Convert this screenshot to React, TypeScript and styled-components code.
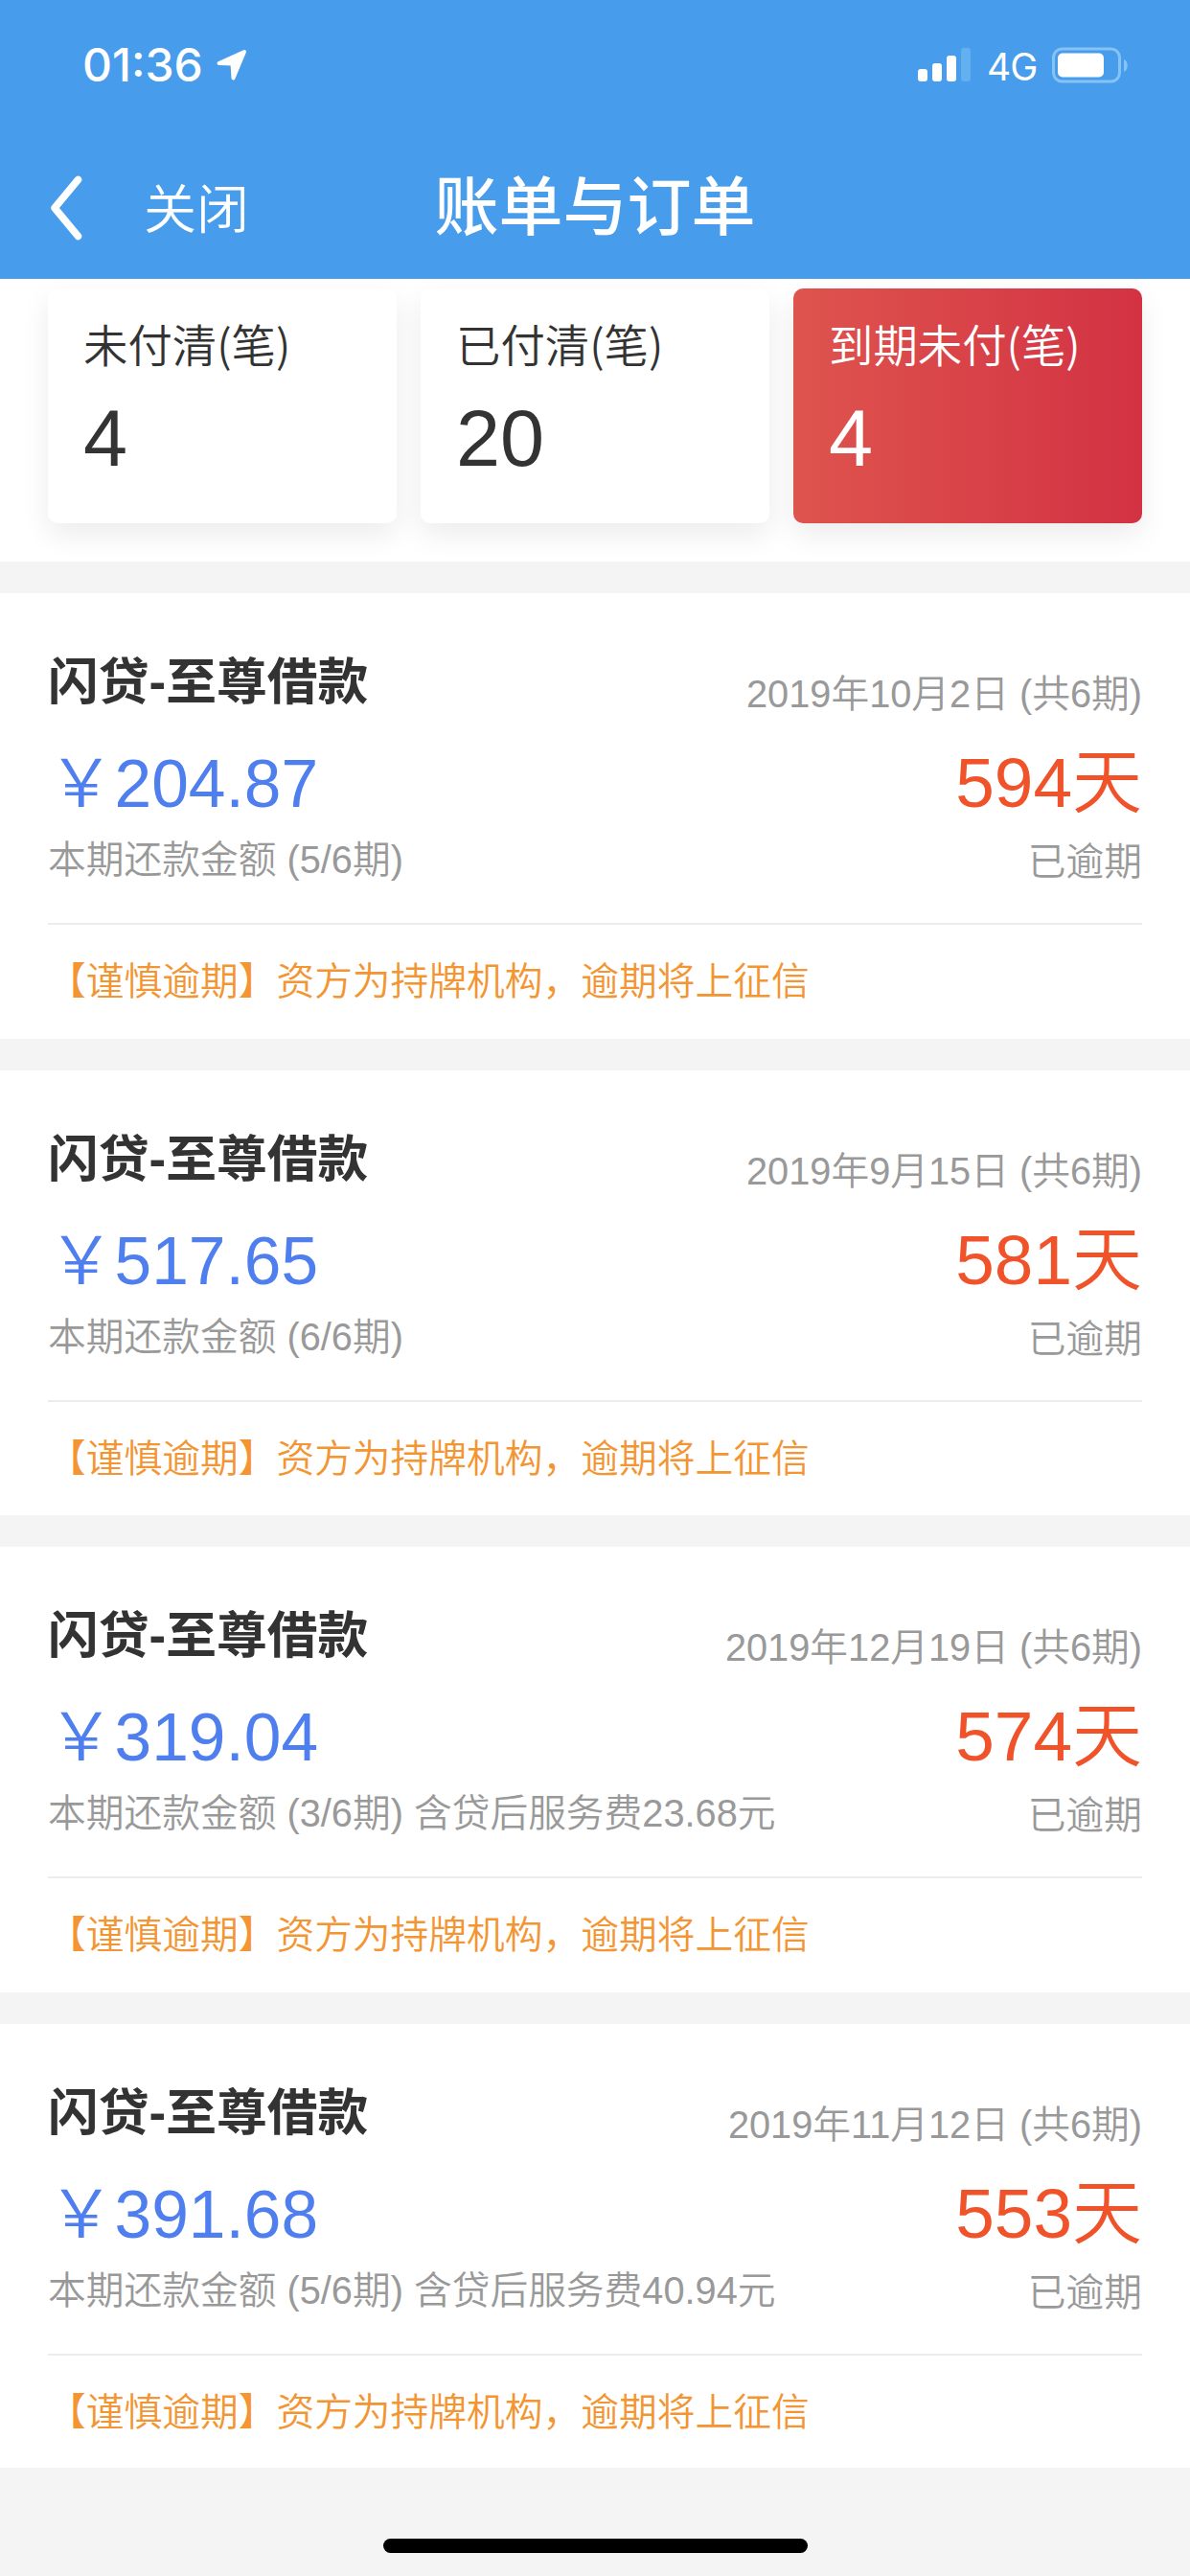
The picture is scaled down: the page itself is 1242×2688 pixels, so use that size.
import React from "react";
import styled, { createGlobalStyle } from "styled-components";

const GlobalStyle = createGlobalStyle`
  * { box-sizing: border-box; }
  body {
    margin: 0;
    background: #f4f4f4;
    font-family: "Liberation Sans", "Noto Sans CJK SC", sans-serif;
    text-spacing-trim: space-all;
  }
`;

const Screen = styled.div`
  width: 1242px;
  height: 2688px;
  display: flex;
  flex-direction: column;
  overflow: hidden;
  background: #f4f4f4;
`;

const Header = styled.header`
  height: 291px;
  flex: none;
  background: #479ceb;
  color: #fff;
`;

const StatusBar = styled.div`
  height: 143px;
  padding: 0 65px 7px 86px;
  display: flex;
  align-items: center;
  justify-content: space-between;
  font-family: Inter, sans-serif;
`;

const StatusGroup = styled.div`
  display: flex;
  align-items: center;
`;

const Clock = styled.span`
  font-size: 48px;
  line-height: 58px;
  font-weight: 500;
  width: 140px;
`;

const Network = styled.span`
  font-size: 39px;
  line-height: 46px;
  width: 68px;
  margin: 3px 0 0 16px;
  letter-spacing: -1px;
`;

const NavBar = styled.nav`
  height: 148px;
  padding: 0 50px;
  display: grid;
  grid-template-columns: 1fr auto 1fr;
  align-items: center;
`;

const NavActions = styled.div`
  display: flex;
  align-items: center;
  gap: 62px;
`;

const CloseText = styled.span`
  font-size: 55px;
  line-height: 70px;
  font-weight: 350;
  padding-top: 3px;
`;

const PageTitle = styled.h1`
  margin: 0;
  font-size: 67px;
  line-height: 80px;
  font-weight: 500;
`;

const Stats = styled.section`
  flex: none;
  height: 295px;
  padding: 10px 50px 40px;
  display: grid;
  grid-template-columns: repeat(3, 1fr);
  gap: 25px;
  background: #fff;
  overflow: hidden;
`;

const StatCard = styled.div<{ $active?: boolean }>`
  padding: 29px 0 0 37px;
  border-radius: 10px;
  color: ${(p) => (p.$active ? "#fff" : "#333")};
  background: ${(p) => (p.$active ? "linear-gradient(90deg, #de544e, #d33243)" : "#fff")};
  box-shadow: 0 12px 30px rgba(0, 0, 0, 0.08);
`;

const StatLabel = styled.div`
  font-family: "Noto Sans CJK SC", sans-serif;
  font-size: 46.4px;
  line-height: 56px;
  white-space: nowrap;
  font-weight: 350;
`;

const StatValue = styled.div`
  margin-top: 27px;
  font-size: 82.8px;
  line-height: 90px;
`;

const BillList = styled.main`
  flex: 1;
  min-height: 0;
  overflow: hidden;
  display: flex;
  flex-direction: column;
  gap: 33.1px;
  padding-top: 33px;
`;

const Bill = styled.article`
  flex: none;
  height: 464.5px;
  padding: 0 50px;
  background: #fff;
`;

const BillBody = styled.div`
  height: 346px;
  padding-top: 46px;
  display: flex;
  justify-content: space-between;
  border-bottom: 2px solid #ececec;
`;

const Column = styled.div<{ $end?: boolean }>`
  display: flex;
  flex-direction: column;
  flex: ${(p) => (p.$end ? "none" : "0 1 auto")};
  min-width: 0;
  align-items: ${(p) => (p.$end ? "flex-end" : "flex-start")};
  padding-top: ${(p) => (p.$end ? 31 : 0)}px;
  white-space: nowrap;
`;

const BillTitle = styled.h2`
  margin: 0;
  font-size: 52.8px;
  line-height: 94px;
  font-weight: 600;
  color: #333;
`;

const Amount = styled.div`
  font-size: 69.5px;
  font-weight: 350;
  line-height: 118px;
  color: #4f7eee;
`;

const Muted = styled.div<{ $line: number }>`
  font-size: 39.74px;
  line-height: ${(p) => p.$line}px;
  font-weight: 350;
  color: #999;
`;

const Days = styled.div`
  font-size: 73px;
  line-height: 129px;
  font-weight: 350;
  color: #f0532a;
`;

const Notice = styled.div`
  font-size: 39.74px;
  line-height: 119px;
  font-weight: 350;
  color: #f29532;
`;

const Footer = styled.footer`
  flex: none;
  height: 113px;
  padding-bottom: 24px;
  display: flex;
  align-items: flex-end;
  justify-content: center;
`;

const HomeIndicator = styled.div`
  width: 443px;
  height: 15px;
  border-radius: 8px;
  background: #000;
`;

const stats = [
  { label: "未付清(笔)", value: 4 },
  { label: "已付清(笔)", value: 20 },
  { label: "到期未付(笔)", value: 4, active: true },
];

const bills = [
  { date: "2019年10月2日", amount: "204.87", days: 594, period: "(5/6期)" },
  { date: "2019年9月15日", amount: "517.65", days: 581, period: "(6/6期)" },
  { date: "2019年12月19日", amount: "319.04", days: 574, period: "(3/6期) 含贷后服务费23.68元" },
  { date: "2019年11月12日", amount: "391.68", days: 553, period: "(5/6期) 含贷后服务费40.94元" },
];

const LocationIcon = () => (
  <svg width="32" height="34" viewBox="0 0 32 34" fill="#fff" stroke="#fff" strokeWidth="4" strokeLinejoin="round">
    <path d="M2.500 15 29 3 17.500 30.500 16.500 15.500Z" />
  </svg>
);

const SignalIcon = () => (
  <svg width="56" height="36" viewBox="0 0 56 36" fill="#fff">
    <rect x="0" y="22" width="10" height="13" rx="3" />
    <rect x="15" y="16" width="10" height="19" rx="3" />
    <rect x="30" y="8" width="10" height="27" rx="3" />
    <rect x="45" y="0" width="10" height="35" rx="3" fill="#62b0f0" />
  </svg>
);

const BatteryIcon = () => (
  <svg width="79" height="38" viewBox="0 0 79 38">
    <rect x="1.5" y="2" width="69" height="34" rx="9" fill="none" stroke="#86c3f5" strokeWidth="3" />
    <rect x="6" y="6.5" width="48" height="25" rx="5" fill="#fff" />
    <path d="M75 13c5 1.500 5 11.500 0 13Z" fill="#86c3f5" />
  </svg>
);

const BackIcon = () => (
  <svg width="38" height="68" viewBox="0 0 38 68" fill="none" stroke="#fff" strokeWidth="7.500" strokeLinecap="round" strokeLinejoin="round">
    <path d="M31.500 4.500 7 34 31.500 63.500" />
  </svg>
);

export default function App() {
  return (
    <Screen lang="zh-CN">
      <GlobalStyle />
      <Header>
        <StatusBar>
          <StatusGroup>
            <Clock>01:36</Clock>
            <LocationIcon />
          </StatusGroup>
          <StatusGroup>
            <SignalIcon />
            <Network>4G</Network>
            <BatteryIcon />
          </StatusGroup>
        </StatusBar>
        <NavBar>
          <NavActions>
            <BackIcon />
            <CloseText>关闭</CloseText>
          </NavActions>
          <PageTitle>账单与订单</PageTitle>
        </NavBar>
      </Header>
      <Stats>
        {stats.map((s) => (
          <StatCard key={s.label} $active={s.active}>
            <StatLabel>{s.label}</StatLabel>
            <StatValue>{s.value}</StatValue>
          </StatCard>
        ))}
      </Stats>
      <BillList>
        {bills.map((b) => (
          <Bill key={b.date}>
            <BillBody>
              <Column>
                <BillTitle>闪贷-至尊借款</BillTitle>
                <Amount>￥{b.amount}</Amount>
                <Muted $line={40}>本期还款金额 {b.period}</Muted>
              </Column>
              <Column $end>
                <Muted $line={56}>{b.date} (共6期)</Muted>
                <Days>{b.days}天</Days>
                <Muted $line={37}>已逾期</Muted>
              </Column>
            </BillBody>
            <Notice>【谨慎逾期】资方为持牌机构，逾期将上征信</Notice>
          </Bill>
        ))}
      </BillList>
      <Footer>
        <HomeIndicator />
      </Footer>
    </Screen>
  );
}
